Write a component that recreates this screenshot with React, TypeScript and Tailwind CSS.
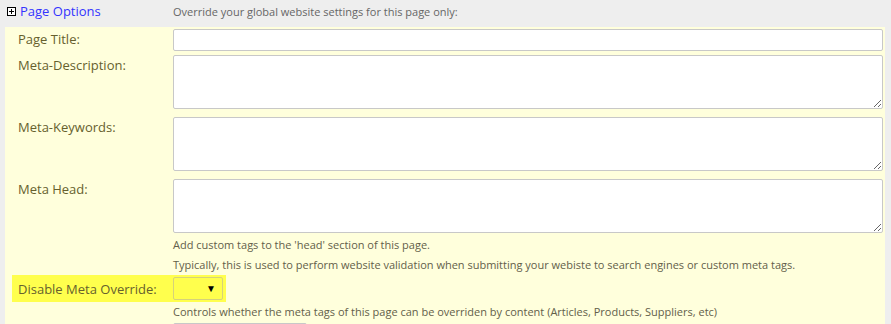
import React from "react"

const font = { fontFamily: '"Open Sans", "Liberation Sans", sans-serif' }

function PlusBox() {
  return (
    <svg width="9" height="9" viewBox="0 0 9 9" className="block">
      <rect x="0.5" y="0.5" width="8" height="8" fill="#fff" stroke="#000" />
      <path d="M2 4.5h5M4.5 2v5" stroke="#000" strokeWidth="1" />
    </svg>
  )
}

function Row({ label, children, className = "" }: { label: string; children: React.ReactNode; className?: string }) {
  return (
    <div className={`flex ${className}`}>
      <div className="w-[168px] shrink-0 pl-[13px] text-[13px] leading-[20px] text-[#665f2e]">{label}</div>
      <div className="flex-1 pr-[2px]">{children}</div>
    </div>
  )
}

export default function App() {
  return (
    <div className="w-[891px] h-[324px] overflow-hidden bg-[#eeeeee]" style={font}>
      {/* header */}
      <div className="flex h-[27px] items-start pt-[3px]">
        <div className="flex w-[173px] items-center gap-[4px] pl-[7px]">
          <PlusBox />
          <span className="text-[13px] leading-[17px] text-[#3333ff]">Page Options</span>
        </div>
        <span className="pt-[1px] text-[11px] leading-[16px] text-[#666666]">
          Override your global website settings for this page only:
        </span>
      </div>

      {/* options panel */}
      <div className="ml-[5px] w-[880px] bg-[#ffffdc] pt-[2px]">
        <Row label="Page Title:">
          <input className="block h-[22px] w-full rounded-[2px] border border-[#c8c8c8] bg-white" />
        </Row>
        <Row label="Meta-Description:" className="mt-[4px]">
          <textarea className="block h-[54px] w-full rounded-[2px] border border-[#c8c8c8] bg-white" />
        </Row>
        <Row label="Meta-Keywords:" className="mt-[8px]">
          <textarea className="block h-[54px] w-full rounded-[2px] border border-[#c8c8c8] bg-white" />
        </Row>
        <Row label="Meta Head:" className="mt-[8px]">
          <textarea className="block h-[54px] w-full rounded-[2px] border border-[#c8c8c8] bg-white" />
          <div className="pt-[2px] text-[11px] leading-[20px] text-[#63604a]">
            <div>Add custom tags to the 'head' section of this page.</div>
            <div>Typically, this is used to perform website validation when submitting your webiste to search engines or custom meta tags.</div>
          </div>
        </Row>

        {/* highlighted row */}
        <div className="ml-[7px] flex h-[27px] w-[214px] items-center bg-[#ffff4d]">
          <div className="w-[161px] shrink-0 pl-[6px] text-[13px] leading-[18px] text-[#665f2e]">Disable Meta Override:</div>
          <div className="flex h-[23px] w-[50px] items-center justify-end rounded-[2px] border border-[#d6d27a] pr-[6px] text-[10px] text-black">
            ▼
          </div>
        </div>
        <div className="flex">
          <div className="w-[168px] shrink-0" />
          <div>
            <div className="text-[11px] leading-[20px] text-[#63604a]">
              Controls whether the meta tags of this page can be overriden by content (Articles, Products, Suppliers, etc)
            </div>
            <div className="mt-[1px] h-[10px] w-[134px] rounded-[2px] border border-[#c8c8c8] bg-white" />
          </div>
        </div>
      </div>
    </div>
  )
}
